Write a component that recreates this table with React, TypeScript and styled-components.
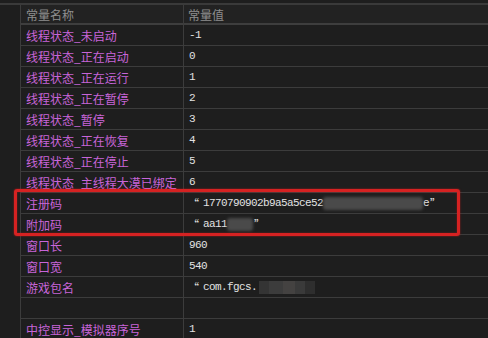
import styled, { createGlobalStyle } from 'styled-components';

const GlobalStyle = createGlobalStyle`
  html, body {
    margin: 0;
    padding: 0;
    background: #1e1e1e;
    overflow: hidden;
  }
`;

const Frame = styled.div`
  position: relative;
  width: 488px;
  height: 338px;
  overflow: hidden;
  background: #1e1e1e;
  padding-top: 3px;
  box-sizing: border-box;
  display: flex;
  flex-direction: column;
`;

const TopRule = styled.div`
  height: 2px;
  background: #3a3a3a;
  flex-shrink: 0;
`;

const Body = styled.div`
  display: flex;
  flex: 1;
`;

const Gutter = styled.div`
  width: 20px;
  flex-shrink: 0;
  background: #1e1e1e;
`;

const Grid = styled.div`
  flex: 1;
  display: grid;
  grid-template-columns: 162px 1fr;
  grid-auto-rows: 21px;
  grid-template-rows: 20px;
  border-left: 1px solid #3c3c3c;
`;

const HeadCell = styled.div<{ $first?: boolean }>`
  display: flex;
  align-items: center;
  padding-left: ${(p) => (p.$first ? '5px' : '4px')};
  border-left: ${(p) => (p.$first ? 'none' : '1px solid #3c3c3c')};
  border-bottom: 2px solid #3e3e3e;
  background: #222222;
  color: #8e8e8e;
  font-family: 'Noto Sans CJK SC', 'Noto Sans', sans-serif;
  font-size: 12px;
`;

const NameCell = styled.div`
  display: flex;
  align-items: center;
  padding-left: 5px;
  border-bottom: 1px solid #3c3c3c;
  color: #c865d9;
  font-family: 'Noto Sans CJK SC', 'Noto Sans', sans-serif;
  font-size: 12px;
  white-space: nowrap;
  overflow: hidden;
`;

const ValueCell = styled.div`
  display: flex;
  align-items: center;
  padding-left: 5px;
  border-left: 1px solid #3c3c3c;
  border-bottom: 1px solid #3c3c3c;
  color: #e2e2e2;
  font-family: 'Liberation Mono', 'DejaVu Sans Mono', monospace;
  font-size: 11px;
  letter-spacing: -0.6px;
  white-space: nowrap;
  overflow: hidden;
`;

const Quote = styled.span<{ $close?: boolean }>`
  font-family: 'Noto Sans CJK SC', sans-serif;
  font-size: 11px;
  letter-spacing: 0;
  margin: ${(p) => (p.$close ? '0 0 0 1px' : '0 4px 0 -1px')};
`;

// Scribbled-out part of a value
const Smudge = styled.span<{ $w: number }>`
  display: inline-block;
  width: ${(p) => p.$w}px;
  height: 13px;
  background: #4a4a4a;
  filter: blur(1.5px);
  border-radius: 3px;
  vertical-align: middle;
`;

// Pixelated part of a value
const Mosaic = styled.span`
  display: inline-flex;
  height: 13px;
  vertical-align: middle;
  margin-left: 2px;
`;

const Tile = styled.span<{ $c: string; $w: number }>`
  width: ${(p) => p.$w}px;
  height: 100%;
  background: ${(p) => p.$c};
`;

const Highlight = styled.div`
  position: absolute;
  left: 14px;
  top: 189px;
  width: 446px;
  height: 47px;
  box-sizing: border-box;
  border: 3px solid #d62222;
  border-radius: 3px;
  box-shadow: 0 0 2px rgba(230, 30, 30, 0.7), inset 0 0 2px rgba(230, 30, 30, 0.5);
  pointer-events: none;
`;

type Row = { name: string; value: React.ReactNode };

const rows: Row[] = [
  { name: '线程状态_未启动', value: '-1' },
  { name: '线程状态_正在启动', value: '0' },
  { name: '线程状态_正在运行', value: '1' },
  { name: '线程状态_正在暂停', value: '2' },
  { name: '线程状态_暂停', value: '3' },
  { name: '线程状态_正在恢复', value: '4' },
  { name: '线程状态_正在停止', value: '5' },
  { name: '线程状态_主线程大漠已绑定', value: '6' },
  {
    name: '注册码',
    value: (
      <>
        <Quote>“</Quote>1770790902b9a5a5ce52<Smudge $w={100} />e<Quote $close>”</Quote>
      </>
    ),
  },
  {
    name: '附加码',
    value: (
      <>
        <Quote>“</Quote>aa11<Smudge $w={26} />
        <Quote $close>”</Quote>
      </>
    ),
  },
  { name: '窗口长', value: '960' },
  { name: '窗口宽', value: '540' },
  {
    name: '游戏包名',
    value: (
      <>
        <Quote>“</Quote>com.fgcs.
        <Mosaic>
          <Tile $c="#343434" $w={10} />
          <Tile $c="#3c3c3c" $w={14} />
          <Tile $c="#444241" $w={12} />
          <Tile $c="#3a3a3a" $w={10} />
          <Tile $c="#2e2e2e" $w={10} />
        </Mosaic>
      </>
    ),
  },
  { name: '', value: '' },
  { name: '中控显示_模拟器序号', value: '1' },
];

export default function App() {
  return (
    <>
      <GlobalStyle />
      <Frame>
        <TopRule />
        <Body>
          <Gutter />
          <Grid>
            <HeadCell $first>常量名称</HeadCell>
            <HeadCell>常量值</HeadCell>
            {rows.map((r, i) => (
              <RowCells key={i} row={r} />
            ))}
          </Grid>
        </Body>
        <Highlight />
      </Frame>
    </>
  );
}

function RowCells({ row }: { row: Row }) {
  return (
    <>
      <NameCell>{row.name}</NameCell>
      <ValueCell>{row.value}</ValueCell>
    </>
  );
}
